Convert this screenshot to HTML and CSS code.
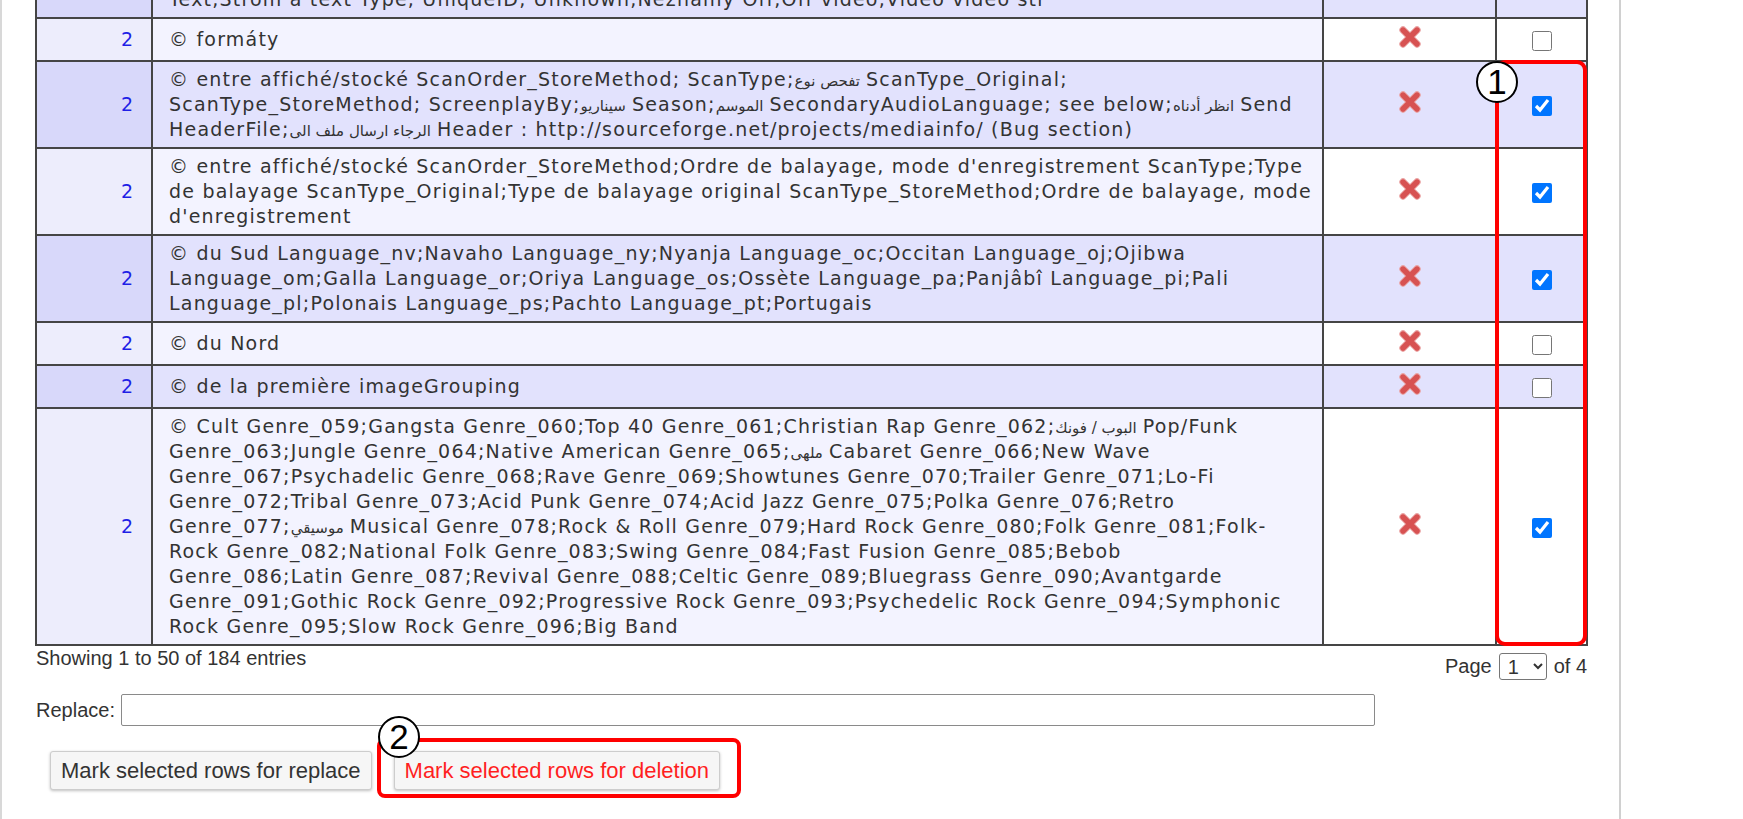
FILE: index.html
```html
<!DOCTYPE html>
<html>
<head>
<meta charset="utf-8">
<link rel="stylesheet" href="styles.css">
</head>
<body>
<div class="page">
  <table class="grid">
    <colgroup><col class="c-num"><col class="c-txt"><col class="c-del"><col class="c-chk"></colgroup>
    <tr class="odd">
      <td class="num">2</td>
      <td class="txt">© Titulky SubTrack;Titulky Summary;Shrnutí Supported;Podporováno SupportedFormats;Podporované<br>Text,Strom a text Type, UniqueID, Unknown,Neznámý Off,Off video,Video video stř</td>
      <td class="del"><span class="x"><svg viewBox="0 0 24 24" width="24" height="24"><path class="halo" d="M5 5L19 19M19 5L5 19"/><path class="core" d="M5 5L19 19M19 5L5 19"/></svg></span></td>
      <td class="chk"><input type="checkbox"></td>
    </tr>
    <tr class="even">
      <td class="num">2</td>
      <td class="txt">© formáty</td>
      <td class="del"><span class="x"><svg viewBox="0 0 24 24" width="24" height="24"><path class="halo" d="M5 5L19 19M19 5L5 19"/><path class="core" d="M5 5L19 19M19 5L5 19"/></svg></span></td>
      <td class="chk"><input type="checkbox"></td>
    </tr>
    <tr class="odd">
      <td class="num">2</td>
      <td class="txt">© entre affiché/stocké ScanOrder_StoreMethod; ScanType;<span class="ar">تفحص نوع</span> ScanType_Original;<br>ScanType_StoreMethod; ScreenplayBy;<span class="ar">سيناريو</span> Season;<span class="ar">الموسم</span> SecondaryAudioLanguage; see below;<span class="ar">انظر أدناه</span> Send<br>HeaderFile;<span class="ar">الرجاء ارسال ملف الى</span> Header : http://sourceforge.net/projects/mediainfo/ (Bug section)</td>
      <td class="del"><span class="x"><svg viewBox="0 0 24 24" width="24" height="24"><path class="halo" d="M5 5L19 19M19 5L5 19"/><path class="core" d="M5 5L19 19M19 5L5 19"/></svg></span></td>
      <td class="chk"><input type="checkbox" checked></td>
    </tr>
    <tr class="even">
      <td class="num">2</td>
      <td class="txt">© entre affiché/stocké ScanOrder_StoreMethod;Ordre de balayage, mode d'enregistrement ScanType;Type<br>de balayage ScanType_Original;Type de balayage original ScanType_StoreMethod;Ordre de balayage, mode<br>d'enregistrement</td>
      <td class="del"><span class="x"><svg viewBox="0 0 24 24" width="24" height="24"><path class="halo" d="M5 5L19 19M19 5L5 19"/><path class="core" d="M5 5L19 19M19 5L5 19"/></svg></span></td>
      <td class="chk"><input type="checkbox" checked></td>
    </tr>
    <tr class="odd">
      <td class="num">2</td>
      <td class="txt">© du Sud Language_nv;Navaho Language_ny;Nyanja Language_oc;Occitan Language_oj;Ojibwa<br>Language_om;Galla Language_or;Oriya Language_os;Ossète Language_pa;Panjâbî Language_pi;Pali<br>Language_pl;Polonais Language_ps;Pachto Language_pt;Portugais</td>
      <td class="del"><span class="x"><svg viewBox="0 0 24 24" width="24" height="24"><path class="halo" d="M5 5L19 19M19 5L5 19"/><path class="core" d="M5 5L19 19M19 5L5 19"/></svg></span></td>
      <td class="chk"><input type="checkbox" checked></td>
    </tr>
    <tr class="even">
      <td class="num">2</td>
      <td class="txt">© du Nord</td>
      <td class="del"><span class="x"><svg viewBox="0 0 24 24" width="24" height="24"><path class="halo" d="M5 5L19 19M19 5L5 19"/><path class="core" d="M5 5L19 19M19 5L5 19"/></svg></span></td>
      <td class="chk"><input type="checkbox"></td>
    </tr>
    <tr class="odd">
      <td class="num">2</td>
      <td class="txt">© de la première imageGrouping</td>
      <td class="del"><span class="x"><svg viewBox="0 0 24 24" width="24" height="24"><path class="halo" d="M5 5L19 19M19 5L5 19"/><path class="core" d="M5 5L19 19M19 5L5 19"/></svg></span></td>
      <td class="chk"><input type="checkbox"></td>
    </tr>
    <tr class="even">
      <td class="num">2</td>
      <td class="txt">© Cult Genre_059;Gangsta Genre_060;Top 40 Genre_061;Christian Rap Genre_062;<span class="ar">البوب / فونك</span> Pop/Funk<br>Genre_063;Jungle Genre_064;Native American Genre_065;<span class="ar">ملهى</span> Cabaret Genre_066;New Wave<br>Genre_067;Psychadelic Genre_068;Rave Genre_069;Showtunes Genre_070;Trailer Genre_071;Lo-Fi<br>Genre_072;Tribal Genre_073;Acid Punk Genre_074;Acid Jazz Genre_075;Polka Genre_076;Retro<br>Genre_077;<span class="ar">موسيقي</span> Musical Genre_078;Rock &amp; Roll Genre_079;Hard Rock Genre_080;Folk Genre_081;Folk-<br>Rock Genre_082;National Folk Genre_083;Swing Genre_084;Fast Fusion Genre_085;Bebob<br>Genre_086;Latin Genre_087;Revival Genre_088;Celtic Genre_089;Bluegrass Genre_090;Avantgarde<br>Genre_091;Gothic Rock Genre_092;Progressive Rock Genre_093;Psychedelic Rock Genre_094;Symphonic<br>Rock Genre_095;Slow Rock Genre_096;Big Band</td>
      <td class="del"><span class="x"><svg viewBox="0 0 24 24" width="24" height="24"><path class="halo" d="M5 5L19 19M19 5L5 19"/><path class="core" d="M5 5L19 19M19 5L5 19"/></svg></span></td>
      <td class="chk"><input type="checkbox" checked></td>
    </tr>
  </table>

  <div class="footer">
    <div class="info-row">
      <div class="info">Showing 1 to 50 of 184 entries</div>
      <div class="pager">Page <select class="sel"><option>1</option></select> of 4</div>
    </div>
    <div class="replace-row">
      <label class="rlabel">Replace:</label>
      <input class="rinput" type="text">
    </div>
    <div class="buttons">
      <button class="btn">Mark selected rows for replace</button>
      <button class="btn btn-del">Mark selected rows for deletion</button>
    </div>
  </div>

  <div class="mark mark-col"></div>
  <div class="badge badge-1">1</div>
  <div class="mark mark-btn"></div>
  <div class="badge badge-2">2</div>
</div>
</body>
</html>
```

FILE: styles.css
```css
html, body {
  margin: 0;
  padding: 0;
  background: #ffffff;
  overflow: hidden;
}

.page {
  position: relative;
  display: flow-root;
  overflow: hidden;
  width: 1617px;
  height: 819px;
  border-left: 2px solid #d8d8d8;
  border-right: 2px solid #d0d0d0;
  background: #fff;
}

.grid {
  margin-left: 33px;
  margin-top: -45px;
  width: 1551px;
  table-layout: fixed;
  border-collapse: collapse;
  font-family: "DejaVu Sans", Verdana, sans-serif;
  font-size: 19px;
  letter-spacing: 1.2px;
  color: #333;
}

.c-num { width: 116px; }
.c-txt { width: 1171px; }
.c-del { width: 173px; }
.c-chk { width: 91px; }

.grid td {
  border: 2px solid #454545;
  padding: 5px 16px;
  line-height: 25px;
  vertical-align: middle;
}

.grid td.num {
  text-align: right;
  color: #1f1fe6;
  padding-right: 18px;
  letter-spacing: 0;
}

.grid td.txt {
  white-space: nowrap;
  overflow: hidden;
}

.ar {
  letter-spacing: 0;
  font-size: 15px;
  line-height: 14px;
}

.grid td.del,
.grid td.chk {
  text-align: center;
  padding: 5px 0;
}

.odd td.num { background: #d8d8fa; }
.odd td.txt, .odd td.del, .odd td.chk { background: #e2e2fd; }
.even td.num { background: #ededfc; }
.even td.txt { background: #f3f3ff; }
.even td.del, .even td.chk { background: #ffffff; }

.x {
  display: inline-flex;
  height: 31px;
  align-items: center;
  padding-bottom: 6px;
  box-sizing: border-box;
}

.x svg path {
  fill: none;
  stroke-linecap: round;
}

.x svg .halo {
  stroke: #eaa3a3;
  stroke-width: 7.4;
}

.x svg .core {
  stroke: #d75252;
  stroke-width: 5.4;
}

.chk input {
  width: 20px;
  height: 20px;
  margin: 0;
  vertical-align: middle;
  accent-color: #0075ff;
}

.footer {
  margin-left: 34px;
  width: 1551px;
  font-family: "Liberation Sans", Arial, sans-serif;
  font-size: 20px;
  color: #333;
}

.info-row {
  display: flex;
  justify-content: space-between;
  align-items: flex-start;
  margin-top: 1px;
}

.info {
  line-height: 23px;
}

.pager {
  display: flex;
  align-items: center;
  gap: 7px;
  margin-top: 6px;
  line-height: 27px;
}

.sel {
  width: 48px;
  height: 27px;
  font-family: "Liberation Sans", Arial, sans-serif;
  font-size: 20px;
  color: #333;
  border: 1px solid #767676;
  border-radius: 3px;
  background: #fff;
  padding: 0 0 0 4px;
}

.replace-row {
  display: flex;
  align-items: center;
  gap: 6px;
  margin-top: 14px;
}

.rinput {
  width: 1254px;
  height: 32px;
  box-sizing: border-box;
  border: 1px solid #8a8a8a;
  border-radius: 2px;
  background: #fff;
}

.buttons {
  display: flex;
  gap: 22px;
  margin-left: 14px;
  margin-top: 25px;
}

.btn {
  height: 39px;
  padding: 0 10px;
  font-family: "Liberation Sans", Arial, sans-serif;
  font-size: 22px;
  color: #333;
  background: #f6f6f6;
  border: 1px solid #cdcdcd;
  border-radius: 3px;
  box-shadow: 0 1px 3px rgba(0,0,0,0.25);
}

.btn-del {
  color: #ff1f1f;
}

.mark {
  position: absolute;
  border: 4px solid #ff0000;
  box-sizing: border-box;
}

.mark-col {
  left: 1493px;
  top: 60px;
  width: 92px;
  height: 586px;
  border-radius: 10px;
}

.mark-btn {
  left: 375px;
  top: 738px;
  width: 364px;
  height: 60px;
  border-radius: 8px;
}

.badge {
  position: absolute;
  width: 42px;
  height: 42px;
  box-sizing: border-box;
  border: 2px solid #000;
  border-radius: 50%;
  background: #fff;
  font-family: "Liberation Sans", Arial, sans-serif;
  font-size: 35px;
  line-height: 38px;
  text-align: center;
  color: #000;
}

.badge-1 {
  left: 1474px;
  top: 61px;
}

.badge-2 {
  left: 376px;
  top: 716px;
}
```
